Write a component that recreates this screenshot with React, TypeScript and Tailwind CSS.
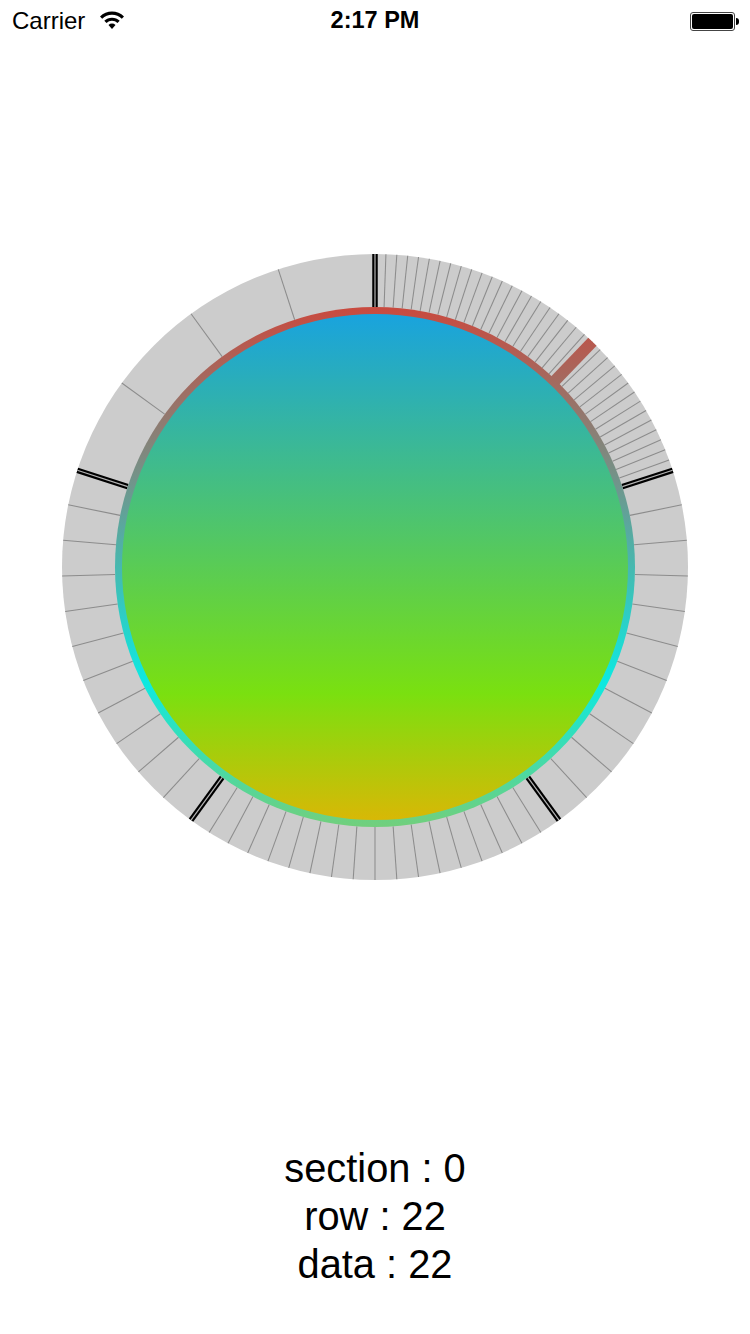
const CX = 327
const CY = 327
const OUTER = 313
const RING = 260
const DISC = 253

// rows per section, each section takes 72 degrees
const sections = [36, 11, 18, 11, 4]
const selected = 44

function polar(deg: number, r: number) {
  const a = (deg * Math.PI) / 180
  return { x: CX + r * Math.sin(a), y: CY - r * Math.cos(a) }
}

function tickAngles() {
  const out: number[] = []
  sections.forEach((rows, s) => {
    for (let i = 1; i < rows; i++) out.push(s * 72 + (i * 72) / rows)
  })
  return out
}

function Wheel() {
  return (
    <svg width={654} height={654} viewBox="0 0 654 654">
      <defs>
        <linearGradient id="ring" gradientUnits="userSpaceOnUse" x1="0" y1={CY - RING} x2="0" y2={CY + RING}>
          <stop offset="0" stopColor="#c94a3f" />
          <stop offset="0.72" stopColor="#0de9e1" />
          <stop offset="1" stopColor="#72cf7c" />
        </linearGradient>
        <linearGradient id="disc" x1="0" y1="0" x2="0" y2="1">
          <stop offset="0" stopColor="#19a3de" />
          <stop offset="0.75" stopColor="#7ae010" />
          <stop offset="1" stopColor="#d8b806" />
        </linearGradient>
      </defs>
      <circle cx={CX} cy={CY} r={OUTER} fill="#cccccc" />
      {tickAngles().map((deg) => {
        const a = polar(deg, RING)
        const b = polar(deg, OUTER)
        return <line key={deg} x1={a.x} y1={a.y} x2={b.x} y2={b.y} stroke="#8c8c8c" strokeWidth={1.05} />
      })}
      {sections.map((_, s) => {
        const a = polar(s * 72, RING)
        const b = polar(s * 72, OUTER)
        return (
          <g key={s}>
            <line x1={a.x} y1={a.y} x2={b.x} y2={b.y} stroke="#000000" strokeWidth={5.5} />
            <line x1={a.x} y1={a.y} x2={b.x} y2={b.y} stroke="#b4b4b4" strokeWidth={1.2} />
          </g>
        )
      })}
      <line
        x1={polar(selected, RING - 2).x}
        y1={polar(selected, RING - 2).y}
        x2={polar(selected, OUTER).x}
        y2={polar(selected, OUTER).y}
        stroke="url(#ring)"
        strokeWidth={11.5}
      />
      <circle cx={CX} cy={CY} r={RING} fill="url(#ring)" />
      <circle cx={CX} cy={CY} r={DISC} fill="url(#disc)" />
    </svg>
  )
}

function StatusBar() {
  return (
    <div className="flex h-10 items-center justify-between pl-3 pr-[11px] pt-[2px] text-[24px] text-black">
      <div className="flex items-center gap-[14px]">
        <span>Carrier</span>
        <svg width="26" height="20" viewBox="0 0 26 20" className="-mt-[3px]">
          <path d="M1 6.5 A17 17 0 0 1 25 6.5 L22.8 8.8 A14 14 0 0 0 3.2 8.8 Z" fill="#000" />
          <path d="M5.3 10.8 A11 11 0 0 1 20.7 10.8 L18.5 13 A8 8 0 0 0 7.5 13 Z" fill="#000" />
          <path d="M9.5 15 A5 5 0 0 1 16.5 15 L13 19 Z" fill="#000" />
        </svg>
      </div>
      <span className="absolute left-0 right-0 text-center text-[23.5px] font-bold">2:17 PM</span>
      <div className="flex items-center">
        <div className="h-[19px] w-[45px] rounded-[3px] border border-[#444] p-[1px]">
          <div className="h-full w-full rounded-[2px] bg-black" />
        </div>
        <div className="ml-[1px] h-[7px] w-[3px] rounded-r-sm bg-black" />
      </div>
    </div>
  )
}

export default function App() {
  return (
    <div className="relative h-[1334px] w-[750px] overflow-hidden bg-white font-['Liberation_Sans',sans-serif]">
      <StatusBar />
      <div className="mt-[200px] flex justify-center">
        <Wheel />
      </div>
      <div className="mt-[250px] text-center text-[39.8px] leading-[48px] text-black">
        <div>section : 0</div>
        <div>row : 22</div>
        <div>data : 22</div>
      </div>
    </div>
  )
}
